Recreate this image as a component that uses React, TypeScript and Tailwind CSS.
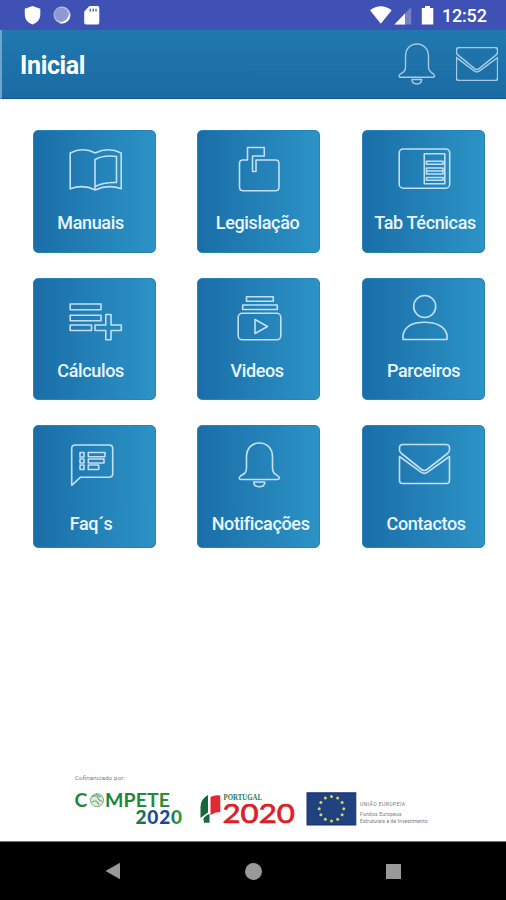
import type { ReactNode } from "react"

const BellShape = () => (
  <>
    <path d="M49.5 32 C49.5 23 55 18 62.3 18 S75.5 23 75.5 32 V43 C75.5 48 78 49 81 51 C83.2 52.8 82.5 54.5 80.5 54.5 H44 C42 54.5 41.5 52.8 43.5 51 C47 49 49.5 48 49.5 43 Z" />
    <path d="M56.8 57 H67.8 C67.8 60 65.5 61.8 62.3 61.8 S56.8 60 56.8 57 Z" />
  </>
)

const MailShape = () => (
  <>
    <path d="M41 19.5 H84 Q87.5 19.5 87.5 23 V25 Q87.5 27 85.5 28.5 L65 44.5 Q62.3 46.5 59.6 44.5 L39.5 28.5 Q37.5 27 37.5 25 V23 Q37.5 19.5 41 19.5 Z" />
    <path d="M37.5 31.5 L59 47.2 Q62.3 49.5 65.6 47.2 L87.5 31.5 V55.5 Q87.5 58.5 84.5 58.5 H40.5 Q37.5 58.5 37.5 55.5 Z" />
  </>
)

interface Tile {
  label: string
  labelClass: string
  icon: ReactNode
}

const tiles: Tile[] = [
  {
    label: "Manuais",
    labelClass: "mt-[8px] mr-[7px]",
    icon: (
      <>
        <path d="M37.2 58.8 V23 Q50 16.5 62.3 23 Q75 16.5 88.2 23 V58.8 Q75 54 62.3 60 Q50 54 37.2 58.8 Z" />
        <path d="M62 59 V29.5 Q71 24.5 83.5 26.5 V52.5 Q71 52 62 56.5" />
      </>
    ),
  },
  {
    label: "Legislação",
    labelClass: "mt-[8px] mr-[2px]",
    icon: <path d="M46 30 H50.5 V17.5 H67.3 V26 H55.5 V41.5 H59 V30 H78.5 Q82 30 82 33.5 V57 Q82 60.7 78.5 60.7 H46 Q42.5 60.7 42.5 57 V33.5 Q42.5 30 46 30 Z" />,
  },
  {
    label: "Tab Técnicas",
    labelClass: "mt-[8px] ml-[4px]",
    icon: (
      <>
        <rect x="37.2" y="19" width="50.5" height="39.2" rx="4" />
        <rect x="62.3" y="23.8" width="20.5" height="30" />
        <path d="M64.5 31.3 H81 V34.3 H64.5 Z M64.5 38 H81 V44 H64.5 Z M64.5 41 H81 M64.5 47.5 H81 V50.3 H64.5 Z" />
      </>
    ),
  },
  {
    label: "Cálculos",
    labelClass: "mt-[8px] mr-[7px]",
    icon: (
      <>
        <path d="M37.2 26 H68 V31.7 H37.2 Z M37.2 37.3 H68 V42.7 H37.2 Z M37.2 47 H58.5 V52.5 H37.2 Z" />
        <path d="M72.8 36.5 H78 V47 H88.3 V52.5 H78 V61.7 H72.8 V52.5 H62 V47 H72.8 Z" />
      </>
    ),
  },
  {
    label: "Videos",
    labelClass: "mt-[8px] mr-[3px]",
    icon: (
      <>
        <path d="M49.5 18.7 H76.3 V23.3 H49.5 Z M45.7 27 H80.3 V31.5 H45.7 Z" />
        <rect x="41.2" y="35.3" width="42.6" height="26.5" rx="4" />
        <path d="M58 41.5 L70.5 48.5 L58 55.5 Z" />
      </>
    ),
  },
  {
    label: "Parceiros",
    labelClass: "mt-[8px] ml-px",
    icon: (
      <>
        <circle cx="62.7" cy="28.5" r="11" />
        <path d="M41 61.5 V57 C43 48 52 44.3 62.7 44.3 S83 48 85 57 V61.5 Z" />
      </>
    ),
  },
  {
    label: "Faq´s",
    labelClass: "mt-[14px] mr-[6px]",
    icon: (
      <>
        <path d="M38.7 60.3 V23.5 Q38.7 20 42.2 20 H76 Q79.7 20 79.7 23.5 V48.8 Q79.7 52.3 76 52.3 H47.3 Z" />
        <path d="M47 27.5 H51 V32 H47 Z M47 34 H51 V38 H47 Z M47 40 H51 V44.5 H47 Z" />
        <path d="M55.3 27.5 H72 V31.8 H55.3 Z M55.3 34 H71 V38 H55.3 Z M55.3 40 H65.7 V44.5 H55.3 Z" />
      </>
    ),
  },
  { label: "Notificações", labelClass: "mt-[14px] ml-[4px]", icon: <BellShape /> },
  { label: "Contactos", labelClass: "mt-[14px] ml-[6px]", icon: <MailShape /> },
]

function StatusBar() {
  return (
    <div className="flex h-[30px] items-center bg-[#3f51b5] pl-6 pr-[19px] text-white">
      <svg width="78" height="30" viewBox="24 0 78 30">
        <path d="M32.5 6 L40.3 8.7 V15 Q40 21.5 32.5 24.6 Q25 21.5 24.8 15 V8.7 Z" fill="#fff" />
        <circle cx="62" cy="15" r="8.5" fill="#b4bbe1" />
        <circle cx="61.3" cy="14.5" r="6.8" fill="#8f99d1" />
        <path d="M70 13 A8.5 8.5 0 0 1 59 23 Q68 21.5 70 13 Z" fill="#fff" />
        <path d="M89.5 6 H97.5 Q99.3 6 99.3 8 V22.5 Q99.3 24.5 97.5 24.5 H86 Q84.2 24.5 84.2 22.5 V11.5 Z" fill="#fff" />
        <path d="M90.3 8.7 V11.5 M93.2 8.7 V11.5 M96 8.7 V11.5" stroke="#3f51b5" strokeWidth="1.3" />
      </svg>
      <svg className="ml-auto" width="64" height="30" viewBox="371 0 64 30">
        <path d="M371 10.2 Q381.8 2.5 392.7 10.2 L381.8 23.8 Z" fill="#fff" />
        <path d="M412.2 7 V24.5 H395.5 Z" fill="#7781c9" />
        <path d="M406 13.5 V24.5 H395.5 Z" fill="#fff" />
        <path d="M426 6 H431 V8 H434.3 V24.6 H422.8 V8 H426 Z" fill="#fff" />
      </svg>
      <span className="ml-[8px] mt-[2px] w-[45px] whitespace-nowrap text-[18px] leading-none font-medium tracking-[-0.2px]">12:52</span>
    </div>
  )
}

function Header() {
  return (
    <header className="flex h-[69px] items-center border-b border-l-2 border-b-[#0f5491] border-l-[#6fa5cb] bg-linear-to-b from-[#2079ae] to-[#1b6ba3] pl-[18px] pr-2">
      <h1 className="mt-[3px] text-[25px] leading-none font-bold tracking-[-0.35px] text-white">Inicial</h1>
      <svg className="ml-auto" width="38" height="42" viewBox="41 17 43 46" preserveAspectRatio="none" fill="none" stroke="#a3cbe6" strokeWidth="1.6">
        <BellShape />
      </svg>
      <svg className="ml-5" width="42" height="34" viewBox="37 19 51 40" preserveAspectRatio="none" fill="none" stroke="#a3cbe6" strokeWidth="1.8">
        <MailShape />
      </svg>
    </header>
  )
}

// Funding partner logos shown under the menu
function Sponsors() {
  const stars = Array.from({ length: 12 }, (_, i) => {
    const a = (i * Math.PI) / 6
    return { x: 331.5 + 12.3 * Math.sin(a), y: 808.7 - 12.3 * Math.cos(a) }
  })
  return (
    <svg width="506" height="72" viewBox="0 769 506 72" className="mt-auto">
      <defs>
        <linearGradient id="compete">
          <stop offset="0" stopColor="#16833d" />
          <stop offset="1" stopColor="#328c35" />
        </linearGradient>
        <linearGradient id="year">
          <stop offset="0" stopColor="#16883e" />
          <stop offset="0.4" stopColor="#174b8e" />
          <stop offset="0.68" stopColor="#174b8e" />
          <stop offset="0.9" stopColor="#2a9a3b" />
        </linearGradient>
      </defs>
      <text x="75" y="780.3" fontSize="6" fill="#777" textLength="50">Cofinanciado por:</text>

      <g fontFamily="Lato" fontWeight="700">
        <text x="74.5" y="807" fontSize="19.5" fill="url(#compete)">C</text>
        <circle cx="97" cy="800.2" r="6.5" fill="#dfece0" stroke="#7eaa79" strokeWidth="1" />
        <path d="M92 797 Q96 794 98 798 T102 801 M92 802 Q97 799 99 805 M96 794 L101 797" fill="none" stroke="#6ba673" strokeWidth="1.2" />
        <text x="105" y="807" fontSize="19.5" fill="url(#compete)" textLength="65">MPETE</text>
        <text x="135.5" y="824.3" fontSize="19" fontWeight="900" fill="url(#year)" textLength="46.5">2020</text>
      </g>

      <path d="M208 795 Q200.5 799 200.5 807 V818 L208 812.5 Z" fill="#17683d" />
      <path d="M210.5 797 Q215 794.5 220.3 795.5 V812 Q215 812 210.5 815 Z" fill="#e02a30" />
      <path d="M203 816 Q208 812.5 209.5 814 V822.8 H204 Z" fill="#17683d" />
      <path d="M200.5 821 Q205 814 210 813" fill="none" stroke="#fff" strokeWidth="1.3" />
      <text x="223.5" y="800" fontSize="7.5" fontFamily="Liberation Serif" fontWeight="700" fill="#2b7552" textLength="38.5" lengthAdjust="spacingAndGlyphs">PORTUGAL</text>
      <text x="222.5" y="823.2" fontSize="26.5" fontFamily="Lato" fill="#dc1f2b" stroke="#dc1f2b" strokeWidth="0.7" textLength="72.5" lengthAdjust="spacingAndGlyphs">2020</text>

      <rect x="307" y="792.8" width="48.8" height="32.2" fill="#20427f" stroke="#1c2b80" strokeWidth="1" />
      {stars.map((s, i) => (
        <circle key={i} cx={s.x} cy={s.y} r="1.5" fill="#d5d65b" />
      ))}
      <g fill="#777" fontSize="5">
        <text x="360" y="806.3" textLength="45">UNIÃO EUROPEIA</text>
        <text x="360" y="816.3" textLength="41.5">Fundos Europeus</text>
        <text x="360" y="822.8" textLength="67.5">Estruturais e de Investimento</text>
      </g>
    </svg>
  )
}

function NavigationBar() {
  return (
    <nav className="flex h-[59px] items-center justify-between border-t border-[#777] bg-black pl-[105px] pr-[105px]">
      <svg width="16" height="18" viewBox="0 0 16 18">
        <path d="M0.5 9 L15 0.8 V17.2 Z" fill="#999" />
      </svg>
      <div className="h-[17px] w-[17px] rounded-full bg-[#999]" />
      <div className="h-[15px] w-[15px] bg-[#999]" />
    </nav>
  )
}

export default function App() {
  return (
    <div className="flex h-[900px] w-[506px] flex-col overflow-hidden bg-white font-[Roboto,sans-serif]">
      <StatusBar />
      <Header />
      <main className="ml-[32.6px] mt-[31px] grid grid-cols-[repeat(3,123px)] gap-x-[41.5px] gap-y-[25px]">
        {tiles.map((tile) => (
          <div
            key={tile.label}
            className="flex h-[122.5px] w-[123px] flex-col rounded-[5px] border border-[#2a82b9] bg-linear-to-r/srgb from-[#1a6ea7] to-[#2c93c6]"
          >
            <svg className="-ml-px -mt-px shrink-0" width="123" height="76" viewBox="0 0 123 76" fill="none" stroke="#c2e0f5" strokeWidth="1.6" strokeLinejoin="round">
              {tile.icon}
            </svg>
            <span className={`text-center text-[18px] leading-[18px] font-medium tracking-[-0.35px] whitespace-nowrap text-[#eaf6ff] ${tile.labelClass}`}>
              {tile.label}
            </span>
          </div>
        ))}
      </main>
      <Sponsors />
      <NavigationBar />
    </div>
  )
}
